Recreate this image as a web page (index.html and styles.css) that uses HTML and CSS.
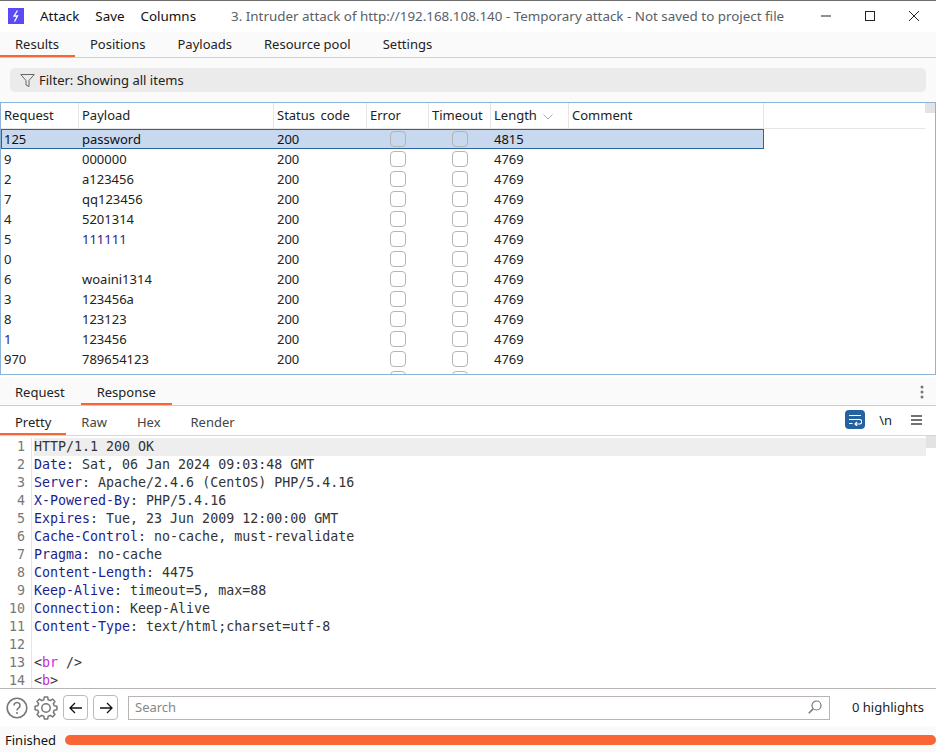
FILE: index.html
```html
<!DOCTYPE html>
<html lang="en">
<head>
<meta charset="utf-8">
<title>Intruder attack</title>
<link rel="stylesheet" href="styles.css">
</head>
<body>
<div class="app">
  <header class="titlebar">
    <svg class="logo" width="16" height="16" viewBox="0 0 16 16"><rect width="16" height="16" fill="#5a4bf5"/><path d="M9.500 2.500 6 8h3.500L6.500 13.500" fill="none" stroke="#fff" stroke-width="1.300"/></svg>
    <nav class="menu"><span>Attack</span><span>Save</span><span>Columns</span></nav>
    <div class="wintitle">3. Intruder attack of http://192.168.108.140 - Temporary attack - Not saved to project file</div>
    <div class="winbtns">
      <svg width="10" height="10" viewBox="0 0 10 10"><path d="M0 5h10" stroke="#222" fill="none"/></svg>
      <svg width="10" height="10" viewBox="0 0 10 10"><rect x=".5" y=".5" width="9" height="9" stroke="#222" fill="none"/></svg>
      <svg width="10" height="10" viewBox="0 0 10 10"><path d="M0 0l10 10M10 0L0 10" stroke="#222" fill="none"/></svg>
    </div>
  </header>
  <div class="tabs maintabs">
    <span class="tab active">Results</span><span class="tab">Positions</span><span class="tab">Payloads</span><span class="tab">Resource pool</span><span class="tab">Settings</span>
  </div>
  <div class="filterwrap">
    <div class="filter">
      <svg width="15" height="15" viewBox="0 0 15 15"><path d="M.8 1.500h13.400L9 7.500v6l-3-1.500V7.500z" fill="none" stroke="#666"/></svg>
      <span>Filter: Showing all items</span>
    </div>
  </div>
  <section class="table">
    <div class="thumb"></div>
    <div class="row head">
      <div class="c c1">Request</div><div class="c c2">Payload</div><div class="c c3">Status code</div><div class="c c4">Error</div><div class="c c5">Timeout</div>
      <div class="c c6">Length<svg class="sort" width="10" height="6" viewBox="0 0 10 6"><path d="M.5.5 5 5 9.500.5" fill="none" stroke="#aaa"/></svg></div><div class="c c7">Comment</div>
    </div>
    <div class="row sel"><div class="c c1">125</div><div class="c c2">password</div><div class="c c3">200</div><div class="c c4"><i class="box"></i></div><div class="c c5"><i class="box"></i></div><div class="c c6">4815</div><div class="c c7"></div></div>
    <div class="row"><div class="c c1">9</div><div class="c c2">000000</div><div class="c c3">200</div><div class="c c4"><i class="box"></i></div><div class="c c5"><i class="box"></i></div><div class="c c6">4769</div><div class="c c7"></div></div>
    <div class="row"><div class="c c1">2</div><div class="c c2">a123456</div><div class="c c3">200</div><div class="c c4"><i class="box"></i></div><div class="c c5"><i class="box"></i></div><div class="c c6">4769</div><div class="c c7"></div></div>
    <div class="row"><div class="c c1">7</div><div class="c c2">qq123456</div><div class="c c3">200</div><div class="c c4"><i class="box"></i></div><div class="c c5"><i class="box"></i></div><div class="c c6">4769</div><div class="c c7"></div></div>
    <div class="row"><div class="c c1">4</div><div class="c c2">5201314</div><div class="c c3">200</div><div class="c c4"><i class="box"></i></div><div class="c c5"><i class="box"></i></div><div class="c c6">4769</div><div class="c c7"></div></div>
    <div class="row"><div class="c c1">5</div><div class="c c2 link">111111</div><div class="c c3">200</div><div class="c c4"><i class="box"></i></div><div class="c c5"><i class="box"></i></div><div class="c c6">4769</div><div class="c c7"></div></div>
    <div class="row"><div class="c c1">0</div><div class="c c2"></div><div class="c c3">200</div><div class="c c4"><i class="box"></i></div><div class="c c5"><i class="box"></i></div><div class="c c6">4769</div><div class="c c7"></div></div>
    <div class="row"><div class="c c1">6</div><div class="c c2">woaini1314</div><div class="c c3">200</div><div class="c c4"><i class="box"></i></div><div class="c c5"><i class="box"></i></div><div class="c c6">4769</div><div class="c c7"></div></div>
    <div class="row"><div class="c c1">3</div><div class="c c2">123456a</div><div class="c c3">200</div><div class="c c4"><i class="box"></i></div><div class="c c5"><i class="box"></i></div><div class="c c6">4769</div><div class="c c7"></div></div>
    <div class="row"><div class="c c1">8</div><div class="c c2">123123</div><div class="c c3">200</div><div class="c c4"><i class="box"></i></div><div class="c c5"><i class="box"></i></div><div class="c c6">4769</div><div class="c c7"></div></div>
    <div class="row"><div class="c c1 link">1</div><div class="c c2">123456</div><div class="c c3">200</div><div class="c c4"><i class="box"></i></div><div class="c c5"><i class="box"></i></div><div class="c c6">4769</div><div class="c c7"></div></div>
    <div class="row"><div class="c c1">970</div><div class="c c2">789654123</div><div class="c c3">200</div><div class="c c4"><i class="box"></i></div><div class="c c5"><i class="box"></i></div><div class="c c6">4769</div><div class="c c7"></div></div>
    <div class="row"><div class="c c1"></div><div class="c c2"></div><div class="c c3"></div><div class="c c4"><i class="box"></i></div><div class="c c5"><i class="box"></i></div><div class="c c6"></div><div class="c c7"></div></div>
  </section>
  <div class="tabs resptabs">
    <span class="tab">Request</span><span class="tab active">Response</span>
    <svg class="dots" width="4" height="14" viewBox="0 0 4 14"><circle cx="2" cy="2" r="1.500" fill="#777"/><circle cx="2" cy="7" r="1.500" fill="#777"/><circle cx="2" cy="12" r="1.500" fill="#777"/></svg>
  </div>
  <div class="tabs subtabs">
    <span class="tab active">Pretty</span><span class="tab">Raw</span><span class="tab">Hex</span><span class="tab">Render</span>
    <div class="subtools">
      <span class="wrapbtn"><svg width="14" height="12" viewBox="0 0 14 12"><path d="M1 1.500h12M1 5.500h10.500a2 2 0 0 1 0 4.500H7M9 8l-2 2 2 2M1 9.500h3.500" fill="none" stroke="#fff" stroke-width="1.100"/></svg></span>
      <span class="nl">\n</span>
      <svg class="burger" width="11" height="10" viewBox="0 0 11 10"><path d="M0 1h11M0 5h11M0 9h11" stroke="#444" stroke-width="1.500"/></svg>
    </div>
  </div>
  <section class="code">
    <div class="gutter"><div>1</div><div>2</div><div>3</div><div>4</div><div>5</div><div>6</div><div>7</div><div>8</div><div>9</div><div>10</div><div>11</div><div>12</div><div>13</div><div>14</div></div>
    <div class="lines">
      <div class="line cur">HTTP/1.1 200 OK</div>
      <div class="line"><b>Date</b>: Sat, 06 Jan 2024 09:03:48 GMT</div>
      <div class="line"><b>Server</b>: Apache/2.4.6 (CentOS) PHP/5.4.16</div>
      <div class="line"><b>X-Powered-By</b>: PHP/5.4.16</div>
      <div class="line"><b>Expires</b>: Tue, 23 Jun 2009 12:00:00 GMT</div>
      <div class="line"><b>Cache-Control</b>: no-cache, must-revalidate</div>
      <div class="line"><b>Pragma</b>: no-cache</div>
      <div class="line"><b>Content-Length</b>: 4475</div>
      <div class="line"><b>Keep-Alive</b>: timeout=5, max=88</div>
      <div class="line"><b>Connection</b>: Keep-Alive</div>
      <div class="line"><b>Content-Type</b>: text/html;charset=utf-8</div>
      <div class="line">&nbsp;</div>
      <div class="line">&lt;<em>br</em> /&gt;</div>
      <div class="line">&lt;<em>b</em>&gt;</div>
    </div>
    <div class="thumb codethumb"></div>
  </section>
  <div class="toolbar">
    <svg width="22" height="22" viewBox="0 0 22 22"><circle cx="11" cy="11" r="9.800" fill="none" stroke="#777" stroke-width="1.600"/><path d="M8 8.500a3 3 0 1 1 4.500 2.600c-1 .6-1.500 1.100-1.500 2.400" fill="none" stroke="#777" stroke-width="1.600"/><circle cx="11" cy="16" r="1" fill="#777"/></svg>
    <svg width="24" height="24" viewBox="0 0 24 24"><path d="M9.800 3.800 10.300 1.100h3.400l.5 2.700 2.050 .85 2.260-1.560 2.410 2.410-1.560 2.260.85 2.050 2.700.5v3.400l-2.700.5-.85 2.050 1.560 2.260-2.410 2.410-2.260-1.560-2.050.85-.5 2.700h-3.400l-.5-2.700-2.050-.85-2.260 1.560-2.410-2.410 1.560-2.260-.85-2.050-2.700-.5v-3.400l2.700-.5.85-2.050-1.560-2.260 2.410-2.410 2.260 1.560z" fill="none" stroke="#777" stroke-width="1.500" stroke-linejoin="round"/><circle cx="12" cy="12" r="4.200" fill="none" stroke="#777" stroke-width="1.500"/></svg>
    <button class="nav"><svg width="14" height="12" viewBox="0 0 14 12"><path d="M13 6H1M6 1 1 6l5 5" fill="none" stroke="#111" stroke-width="1.300"/></svg></button>
    <button class="nav"><svg width="14" height="12" viewBox="0 0 14 12"><path d="M1 6h12M8 1l5 5-5 5" fill="none" stroke="#111" stroke-width="1.300"/></svg></button>
    <div class="search"><span>Search</span><svg width="14" height="14" viewBox="0 0 14 14"><circle cx="8.500" cy="5.500" r="4.500" fill="none" stroke="#777" stroke-width="1.200"/><path d="M5.200 8.800.8 13.200" stroke="#777" stroke-width="1.600"/></svg></div>
    <div class="hl">0 highlights</div>
  </div>
  <footer class="status">
    <span>Finished</span>
    <div class="bar"></div>
  </footer>
</div>
</body>
</html>
```
FILE: styles.css
```css
* { box-sizing: border-box; }
html, body { margin: 0; padding: 0; }
body { width: 936px; height: 752px; overflow: hidden; background: #fff; color: #222; font: 13px/18px "Noto Sans", "Open Sans", sans-serif; }
.app { display: flex; flex-direction: column; height: 752px; }
.titlebar { height: 32px; display: flex; align-items: center; border-top: 1px solid #6e6e6e; background: #fff; padding: 0 0 1px 8px; flex: none; font-size: 13.4px; }
.logo { flex: none; }
.menu { display: flex; gap: 16px; margin-left: 16px; color: #111; }
.wintitle { margin-left: 35px; color: #5a6068; white-space: nowrap; }
.winbtns { margin-left: auto; display: flex; gap: 34px; padding-right: 17px; align-items: center; }
.tabs { display: flex; background: #fafafa; flex: none; }
.tab { display: block; color: #222; }
.maintabs { height: 26px; border-bottom: 1px solid #cfcfcf; }
.maintabs .tab { padding: 3px 16px 0; height: 25px; }
.maintabs .tab:first-child { width: 75px; padding-left: 15px; margin-right: -1px; }
.tab.active { border-bottom: 2px solid #f96535; }
.filterwrap { height: 44px; background: #fafafa; padding: 10px 10px 0; flex: none; }
.filter { height: 24px; width: 916px; background: #ebebeb; border-radius: 5px; display: flex; align-items: center; gap: 4px; padding-left: 10px; }
.table { position: relative; height: 273px; border: 1px solid #8cb3d9; overflow: hidden; flex: none; background: #fff; }
.thumb { position: absolute; right: 0; top: 0; width: 10px; height: 10px; background: #e3e3e3; }
.row { display: flex; height: 20px; width: 763px; align-items: center; }
.row.head { height: 26px; width: 924px; border-bottom: 1px solid #e6e6e6; align-items: flex-start; }
.head .c { border-right: 1px solid #e6e6e6; height: 25px; line-height: 25px; }
.head .c3 { word-spacing: 2px; }
.c { flex: none; padding-left: 3px; white-space: nowrap; height: 20px; line-height: 20px; color: #222; }
.c1 { width: 78px; } .c2 { width: 195px; } .c3 { width: 93px; } .c4 { width: 62px; } .c5 { width: 62px; } .c6 { width: 78px; } .c7 { width: 195px; }
.c:has(> .box) { display: flex; align-items: center; justify-content: center; padding-left: 0; }
.box { display: block; width: 16px; height: 16px; border: 1px solid #b5b5b5; border-radius: 4px; background: #fff; }
.sel { background: #c7d8ef; box-shadow: inset 0 0 0 1px #2b659c; }
.sel .c { color: #111; }
.sel .box { background: transparent; }
.link { color: #2a1a8c; }
.sort { margin-left: 6px; }
.resptabs { height: 28px; margin-top: 3px; border-bottom: 1px solid #cfcfcf; align-items: stretch; }
.resptabs .tab { padding: 5px 15px 0; height: 27px; }
.resptabs .tab + .tab { padding: 5px 16px 0; margin-left: 1px; }
.dots { margin: 7px 12px 0 auto; }
.subtabs { height: 30px; background: #fff; border-bottom: 1px solid #d5d5d5; }
.subtabs .tab { padding: 7px 15px 0; height: 29px; color: #444; }
.subtabs .tab.active { color: #222; }
.subtools { margin-left: auto; display: flex; align-items: center; gap: 14px; padding-right: 14px; padding-bottom: 2px; }
.wrapbtn { width: 20px; height: 19px; background: #24639f; border-radius: 4px; display: flex; align-items: center; justify-content: center; }
.nl { color: #222; }
.burger { margin-left: 5px; }
.code { position: relative; flex: 1 1 0; min-height: 0; overflow: hidden; display: flex; font: 13.300px/18px "DejaVu Sans Mono", monospace; padding-top: 2px; }
.gutter { width: 32px; flex: none; text-align: right; padding-right: 6px; border-right: 1px solid #e5e5e5; color: #777; }
.lines { flex: 1; padding-left: 2px; color: #333; }
.line { height: 18px; white-space: pre; }
.line.cur { background: #eeeeee; margin-right: 10px; }
.line b { font-weight: normal; color: #1d1d8c; }
.line em { font-style: normal; color: #c52bd4; }
.codethumb { top: 0; height: 12px; }
.toolbar { height: 38px; flex: none; border-top: 1px solid #b8b4b4; display: flex; align-items: center; padding: 0 6px; background: #fff; }
.toolbar > svg + svg { margin-left: 6px; }
.nav { width: 25px; height: 25px; border: 1px solid #bbb; border-radius: 4px; background: #fff; padding: 0; display: flex; align-items: center; justify-content: center; margin-left: 5px; }
.search { margin-left: 10px; width: 702px; height: 24px; border: 1px solid #b8b4b4; display: flex; align-items: center; justify-content: space-between; padding: 0 7px 2px 6px; color: #888; }
.hl { margin-left: 22px; margin-bottom: 2px; color: #222; white-space: nowrap; }
.status { height: 26px; flex: none; background: #fafafa; display: flex; align-items: center; padding: 2px 0 0 5px; color: #111; }
.bar { margin-left: 9px; flex: 1; height: 10px; background: #f96535; border-radius: 5px; }
```
